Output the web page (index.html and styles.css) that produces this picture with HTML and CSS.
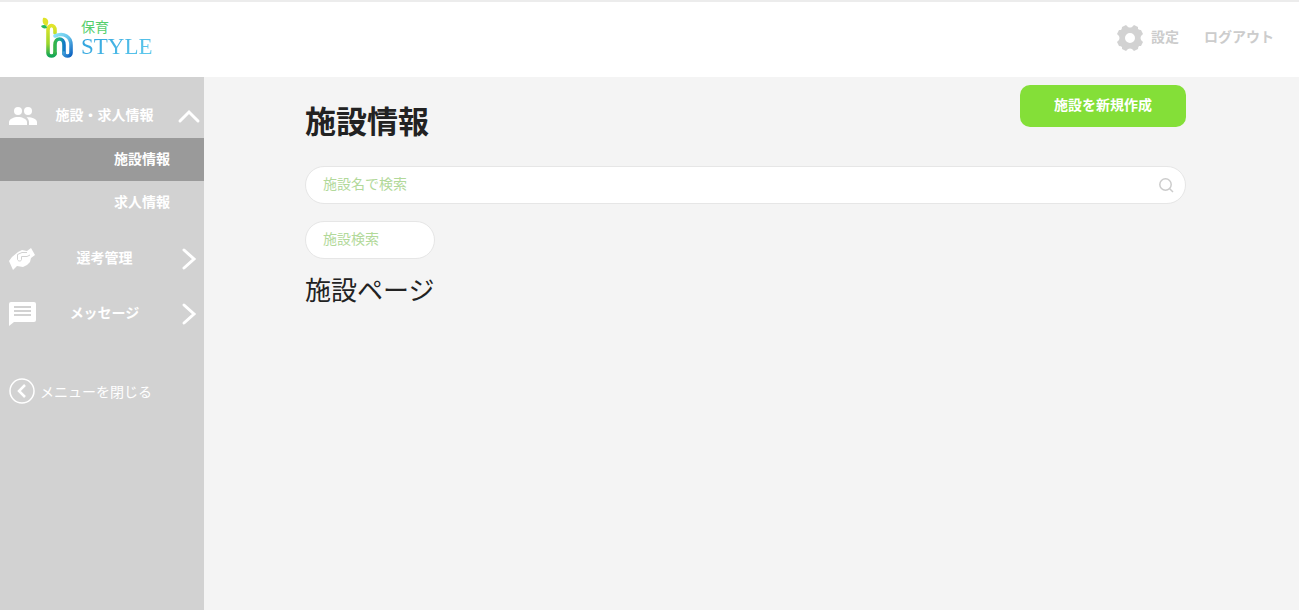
FILE: index.html
```
<!DOCTYPE html>
<html lang="ja">
<head>
    <meta charset="UTF-8">
    <meta name="viewport" content="width=device-width, initial-scale=1.0">
    <title>施設情報 | 保育STYLE</title>
    <link rel="stylesheet" href="styles.css">
</head>
<body>
<!-- Header -->
    <header class="header">
        <a href="#" class="logo">
            <svg class="logo-mark" width="32" height="42" viewBox="0 0 32 42" aria-hidden="true">
                <defs>
                    <linearGradient id="stem" x1="0" y1="0" x2="0" y2="1">
                        <stop offset="0" stop-color="#e3e52b"/>
                        <stop offset="0.6" stop-color="#9bd62c"/>
                        <stop offset="1" stop-color="#12a557"/>
                    </linearGradient>
                    <linearGradient id="arch" x1="0" y1="0" x2="1" y2="1">
                        <stop offset="0" stop-color="#8be2f7"/>
                        <stop offset="0.5" stop-color="#64c2ea"/>
                        <stop offset="1" stop-color="#0c62c0"/>
                    </linearGradient>
                    <linearGradient id="inner" x1="0" y1="0" x2="1" y2="0">
                        <stop offset="0" stop-color="#35b548"/>
                        <stop offset="0.5" stop-color="#1bb08c"/>
                        <stop offset="1" stop-color="#1478c8"/>
                    </linearGradient>
                </defs>
                <g fill="none" stroke-width="3.600" stroke-linecap="round">
                    <path d="M14 37V28C14 20 23 20 23 28V37" stroke="url(#inner)"/>
                    <path d="M14 16V13C14 7 7 7 7 13V36C7 40 14 40 14 36" stroke="url(#stem)"/>
                    <path d="M14 19C23 15 30 20 30 28V36C30 40 23 40 23 36" stroke="url(#arch)"/>
                </g>
                <path d="M2 1C6 0 9 4 6 9C2 8 1 5 2 1z" fill="#dfe329"/>
                <path d="M0 9C3 7 6 8 6 11C3 12 1 11 0 9z" fill="#27ba5c"/>
            </svg>
            <span class="logo-text">
                <span class="logo-small">保育</span>
                <span class="logo-big">STYLE</span>
            </span>
        </a>
        <nav class="header-links">
            <a href="#">
                <svg width="28" height="28" viewBox="0 0 28 28" aria-hidden="true">
                    <path fill="#d2d2d2" fill-rule="evenodd" d="M10 1L12 3Q14 4 16 3L18 1L22 3V5Q23 6 25 6L27 10L25 12Q24 14 25 16L27 18L25 22H23Q22 23 22 25L18 27L16 25Q14 24 12 25L10 27L6 25V23Q5 22 3 22L1 18L3 16Q4 14 3 12L1 10L3 6H5Q6 5 6 3zM14 9a5 5 0 1 0 0 10a5 5 0 0 0 0-10z"/>
                </svg>
                <span>設定</span>
            </a>
            <a href="#"><span>ログアウト</span></a>
        </nav>
    </header>

    <div class="page">
<!-- Sidebar -->
        <nav class="sidebar">
            <a href="#" class="menu-item">
                <svg width="28" height="20" viewBox="0 0 28 20" fill="#fff" aria-hidden="true">
                    <circle cx="9" cy="5" r="4"/>
                    <circle cx="19" cy="5" r="4"/>
                    <path d="M0 19v-3c0-3 5-5 9-5s9 2 9 5v3z"/>
                    <path d="M20 19v-3c0-2-1-3.500-2.500-4.800C22 10.800 28 12.500 28 16v3z"/>
                </svg>
                <span>施設・求人情報</span>
                <svg class="arrow" width="24" height="24" viewBox="0 0 24 24" aria-hidden="true"><path d="M3 17L12 8L21 17"/></svg>
            </a>
            <div class="submenu">
                <a href="#" class="active">施設情報</a>
                <a href="#">求人情報</a>
            </div>
            <a href="#" class="menu-item">
                <svg width="26" height="22" viewBox="0 0 26 22" aria-hidden="true">
                    <path fill="#fff" d="M0 13L3 9L9 4L13 2L18 3L22 0L26 7L22 10L21 14L18 17L14 19L8 18L4 22z"/>
                    <path fill="none" stroke="#d2d2d2" stroke-linejoin="round" d="M18 4.500H13L8.500 6.500V11.500C9 13.500 12.500 13.500 12.500 11.500V8.500H18L21 7"/>
                </svg>
                <span>選考管理</span>
                <svg class="arrow" width="24" height="24" viewBox="0 0 24 24" aria-hidden="true"><path d="M7 3L17 12L7 21"/></svg>
            </a>
            <a href="#" class="menu-item">
                <svg width="27" height="24" viewBox="0 0 27 24" aria-hidden="true">
                    <path fill="#fff" d="M2 0H25Q27 0 27 2V18Q27 20 25 20H5L0 24V2Q0 0 2 0z"/>
                    <path stroke="#d2d2d2" stroke-width="2" d="M5 5H22M5 9H22M5 13H22"/>
                </svg>
                <span>メッセージ</span>
                <svg class="arrow" width="24" height="24" viewBox="0 0 24 24" aria-hidden="true"><path d="M7 3L17 12L7 21"/></svg>
            </a>
            <button type="button" class="close-menu">
                <svg width="26" height="26" viewBox="0 0 26 26" fill="none" stroke="#fff" aria-hidden="true">
                    <circle cx="13" cy="13" r="12" stroke-width="1.500"/>
                    <path d="M16 7L10 13L16 19" stroke-width="2.500"/>
                </svg>
                メニューを閉じる
            </button>
        </nav>

<!-- Facility list -->
        <main class="content">
            <div class="title-row">
                <h1>施設情報</h1>
                <button type="button" class="create-button">施設を新規作成</button>
            </div>
            <form class="search">
                <div class="search-box">
                    <input type="text" placeholder="施設名で検索" aria-label="施設名で検索">
                    <button type="submit" aria-label="検索">
                        <svg width="16" height="16" viewBox="0 0 16 16" fill="none" stroke="#ccc" stroke-width="1.500" aria-hidden="true">
                            <circle cx="7.500" cy="7.500" r="5.700"/>
                            <path d="M11.500 11.500L15 15"/>
                        </svg>
                    </button>
                </div>
                <input type="text" class="filter" placeholder="施設検索" aria-label="施設検索">
            </form>
            <h2>施設ページ</h2>
        </main>
    </div>
</body>
</html>
```
FILE: styles.css
```
* {
    box-sizing: border-box;
}

body {
    margin: 0;
    min-height: 100vh;
    display: flex;
    flex-direction: column;
    font-family: "Noto Sans CJK JP", sans-serif;
    font-size: 14px;
    line-height: 20px;
    color: #222;
    background-color: #f4f4f4;
}

a {
    text-decoration: none;
}

button,
input {
    font: inherit;
}

svg {
    display: block;
    flex-shrink: 0;
}

/* Header */
.header {
    display: flex;
    justify-content: space-between;
    align-items: center;
    height: 77px;
    padding: 0 25px 4px 41px;
    background-color: #fff;
    border-top: 2px solid #ececec;
}

.logo {
    display: flex;
    align-items: center;
    gap: 8px;
}

.logo-text {
    display: flex;
    flex-direction: column;
}

.logo-small {
    font-size: 14px;
    line-height: 18px;
    color: #55cf6c;
}

.logo-big {
    font-family: "Liberation Serif", serif;
    font-size: 23px;
    line-height: 24px;
    color: transparent;
    background: linear-gradient(135deg, #2b9fdc, #64cdee);
    background-clip: text;
}

.header-links {
    display: flex;
    align-items: center;
    gap: 25px;
}

.header-links a {
    display: flex;
    align-items: center;
    gap: 7px;
    color: #ccc;
    font-weight: bold;
}

.header-links span,
.menu-item span {
    padding-bottom: 3px;
}

/* Sidebar */
.page {
    display: flex;
    flex: 1;
}

.sidebar {
    width: 204px;
    flex-shrink: 0;
    padding-top: 11px;
    background-color: #d2d2d2;
}

.menu-item {
    display: grid;
    grid-template-columns: 36px 1fr 40px;
    align-items: center;
    height: 55px;
    padding-left: 9px;
    color: #fff;
    font-weight: bold;
    text-align: center;
}

.menu-item .arrow {
    justify-self: end;
    margin-right: 3px;
    fill: none;
    stroke: #fff;
    stroke-width: 3;
    stroke-linecap: round;
}

.submenu {
    margin: -5px 0 7px;
}

.submenu a {
    display: block;
    padding: 10px 34px 13px;
    color: #fff;
    font-weight: bold;
    text-align: right;
}

.submenu .active {
    background-color: #9a9a9a;
}

.close-menu {
    display: flex;
    align-items: center;
    gap: 5px;
    margin-top: 37px;
    padding: 0 9px;
    border: none;
    background: none;
    color: #fff;
    cursor: pointer;
}

/* Content */
.content {
    flex: 1;
    padding: 8px 113px 0 101px;
}

.title-row {
    display: flex;
    justify-content: space-between;
    align-items: flex-start;
    margin-bottom: 23px;
}

h1 {
    margin: 12px 0 0;
    font-size: 31px;
    line-height: 46px;
}

.create-button {
    width: 166px;
    height: 42px;
    padding: 0 0 4px;
    border: none;
    border-radius: 10px;
    background-color: #84df38;
    color: #fff;
    font-weight: bold;
    cursor: pointer;
}

.search-box,
.filter {
    height: 38px;
    border: 1px solid #e6e6e6;
    border-radius: 20px;
    background-color: #fff;
}

.search-box {
    display: flex;
    align-items: center;
    margin-bottom: 17px;
    padding: 0 11px 0 17px;
}

.search-box input {
    flex: 1;
    padding: 0 0 4px;
    border: none;
    outline: none;
    background: none;
}

.search-box button {
    padding: 0;
    border: none;
    background: none;
    cursor: pointer;
}

.filter {
    display: block;
    width: 130px;
    padding: 0 17px 4px;
}

input::placeholder {
    color: #b2d99a;
    opacity: 1;
}

h2 {
    margin: 10px 0 0;
    font-size: 26px;
    font-weight: normal;
    line-height: 40px;
}
```
